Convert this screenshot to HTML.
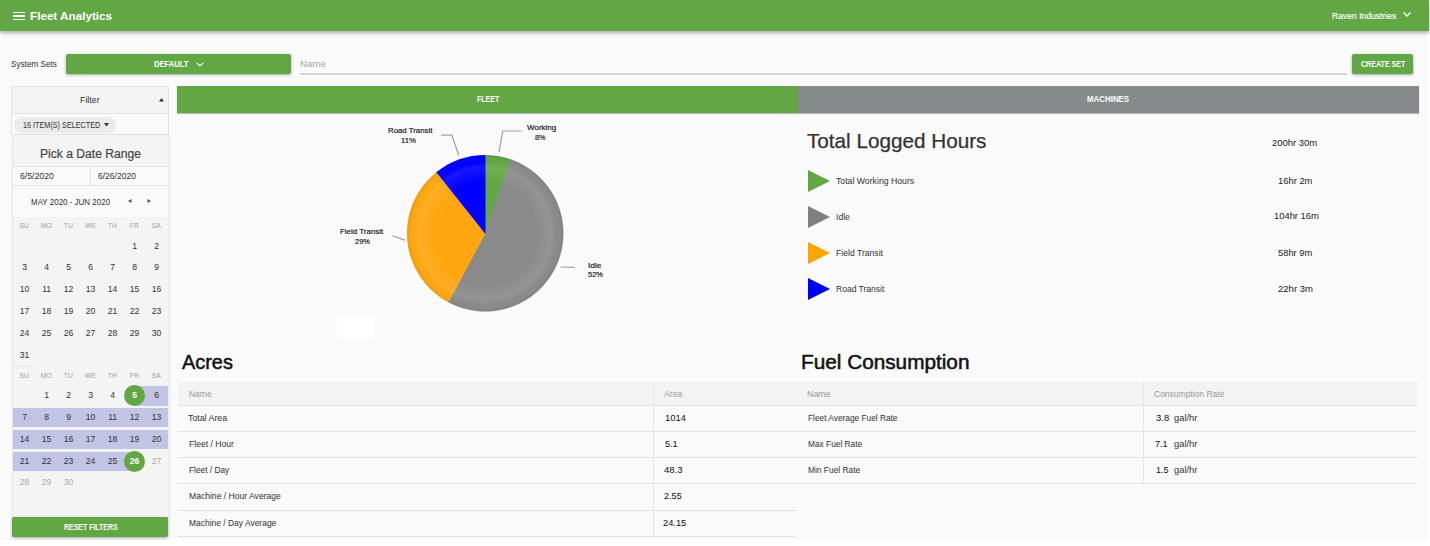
<!DOCTYPE html>
<html><head><meta charset="utf-8">
<style>
*{box-sizing:border-box;margin:0;padding:0}
html,body{width:1430px;height:546px;overflow:hidden;background:#fff;font-family:"Liberation Sans",sans-serif;color:#333}
.a{position:absolute}
.t{position:absolute;white-space:nowrap;line-height:1}
</style></head>
<body>

<div class="a" style="left:0px;top:0px;width:1428px;height:540px;background:#fafafa"></div>
<div class="a" style="left:0px;top:0px;width:1429px;height:31px;background:#62a744;box-shadow:0 2px 4px rgba(0,0,0,.32)"></div>
<div class="a" style="left:13.2px;top:12.2px;width:11.5px;height:1.25px;background:#fff"></div>
<div class="a" style="left:13.2px;top:15.4px;width:11.5px;height:1.25px;background:#fff"></div>
<div class="a" style="left:13.2px;top:18.6px;width:11.5px;height:1.25px;background:#fff"></div>
<div class="t" style="left:30.49px;top:10.57px;font-size:11.5px;color:#fff;font-weight:700;transform:scaleX(1.0157);transform-origin:0 0;">Fleet Analytics</div>
<div class="t" style="left:1331.90px;top:11.92px;font-size:8.6px;color:#fff;font-weight:400;transform:scaleX(0.9969);transform-origin:0 0;-webkit-text-stroke:0.15px #fff">Raven Industries</div>
<svg class="a" style="left:1402px;top:11px" width="10" height="7" viewBox="0 0 10 7"><path d="M1.5 1.5 L5 5 L8.5 1.5" stroke="#fff" stroke-width="1.3" fill="none"/></svg>
<div class="t" style="left:11.01px;top:60.48px;font-size:9px;color:#333;font-weight:400;transform:scaleX(0.9081);transform-origin:0 0;">System Sets</div>
<div class="a" style="left:66px;top:54px;width:225px;height:20px;background:#62a744;box-shadow:0 1px 3px rgba(0,0,0,.35);border-radius:2px"></div>
<div class="t" style="left:153.64px;top:60.27px;font-size:8.3px;color:#fff;font-weight:700;transform:scaleX(0.9120);transform-origin:0 0;">DEFAULT</div>
<svg class="a" style="left:194.5px;top:60.5px" width="10" height="7" viewBox="0 0 10 7"><path d="M1.6 1.8 L5 5 L8.4 1.8" stroke="#fff" stroke-width="1.15" fill="none"/></svg>
<div class="t" style="left:300.46px;top:60.28px;font-size:9px;color:#a9a9a9;font-weight:400;transform:scaleX(1.0733);transform-origin:0 0;">Name</div>
<div class="a" style="left:300px;top:73px;width:1047px;height:1.7px;background:#d4d4d4"></div>
<div class="a" style="left:1352px;top:54px;width:61px;height:20px;background:#62a744;box-shadow:0 1px 3px rgba(0,0,0,.35);border-radius:2px"></div>
<div class="t" style="left:1360.55px;top:60.27px;font-size:8.3px;color:#fff;font-weight:700;transform:scaleX(0.8548);transform-origin:0 0;">CREATE SET</div>
<div class="a" style="left:11px;top:86px;width:158px;height:49px;background:#fafafa;border:1px solid #e3e3e3"></div>
<div class="a" style="left:12px;top:87px;width:156px;height:27px;background:#f4f4f4;border-bottom:1px solid #e3e3e3"></div>
<div class="t" style="left:80.39px;top:95.88px;font-size:9px;color:#333;font-weight:400;transform:scaleX(0.9809);transform-origin:0 0;">Filter</div>
<svg class="a" style="left:159px;top:98px" width="5" height="4" viewBox="0 0 5 4"><path d="M0 3.5 L2.5 0 L5 3.5Z" fill="#333"/></svg>
<div class="a" style="left:14px;top:117px;width:102px;height:16px;border-radius:8px;background:#ebebeb"></div>
<div class="t" style="left:22.65px;top:121.09px;font-size:8.4px;color:#333;font-weight:400;transform:scaleX(0.8651);transform-origin:0 0;">16 ITEM(S) SELECTED</div>
<svg class="a" style="left:104px;top:123px" width="5" height="4" viewBox="0 0 5 4"><path d="M0 0 L5 0 L2.5 3.5Z" fill="#333"/></svg>
<div class="a" style="left:13px;top:135px;width:156px;height:382px;background:#f4f4f4;box-shadow:0 1px 2px rgba(0,0,0,.25)"></div>
<div class="t" style="left:40.18px;top:148.12px;font-size:12.5px;color:#444;font-weight:400;transform:scaleX(0.9694);transform-origin:0 0;-webkit-text-stroke:0.2px #444">Pick a Date Range</div>
<div class="a" style="left:13px;top:166px;width:155px;height:20px;background:#fafafa;border-top:1px solid #e4e4e4;border-bottom:1px solid #e4e4e4"></div>
<div class="a" style="left:90px;top:166px;width:1px;height:20px;background:#e4e4e4"></div>
<div class="t" style="left:19.50px;top:171.65px;font-size:8.8px;color:#333;font-weight:400;transform:scaleX(0.9901);transform-origin:0 0;">6/5/2020</div>
<div class="t" style="left:97.70px;top:171.65px;font-size:8.8px;color:#333;font-weight:400;transform:scaleX(0.9708);transform-origin:0 0;">6/26/2020</div>
<div class="a" style="left:13px;top:186px;width:155px;height:31px;background:#fafafa"></div>
<div class="t" style="left:31.02px;top:198.02px;font-size:8.6px;color:#333;font-weight:400;transform:scaleX(0.9281);transform-origin:0 0;">MAY 2020 - JUN 2020</div>
<svg class="a" style="left:127.5px;top:199.4px" width="4" height="4" viewBox="0 0 4 4"><path d="M3.5 0 L0 2 L3.5 4Z" fill="#555"/></svg>
<svg class="a" style="left:147.2px;top:199.4px" width="4" height="4" viewBox="0 0 4 4"><path d="M0.5 0 L4 2 L0.5 4Z" fill="#555"/></svg>
<div class="t" style="left:-175.70px;width:400px;text-align:center;top:223.34px;font-size:6.8px;color:#9e9e9e;font-weight:400;">SU</div>
<div class="t" style="left:-153.70px;width:400px;text-align:center;top:223.34px;font-size:6.8px;color:#9e9e9e;font-weight:400;">MO</div>
<div class="t" style="left:-131.70px;width:400px;text-align:center;top:223.34px;font-size:6.8px;color:#9e9e9e;font-weight:400;">TU</div>
<div class="t" style="left:-109.70px;width:400px;text-align:center;top:223.34px;font-size:6.8px;color:#9e9e9e;font-weight:400;">WE</div>
<div class="t" style="left:-87.70px;width:400px;text-align:center;top:223.34px;font-size:6.8px;color:#9e9e9e;font-weight:400;">TH</div>
<div class="t" style="left:-65.70px;width:400px;text-align:center;top:223.34px;font-size:6.8px;color:#9e9e9e;font-weight:400;">FR</div>
<div class="t" style="left:-43.70px;width:400px;text-align:center;top:223.34px;font-size:6.8px;color:#9e9e9e;font-weight:400;">SA</div>
<div class="t" style="left:-65.40px;width:400px;text-align:center;top:241.52px;font-size:8.6px;color:#333;font-weight:400;">1</div>
<div class="t" style="left:-43.40px;width:400px;text-align:center;top:241.52px;font-size:8.6px;color:#333;font-weight:400;">2</div>
<div class="t" style="left:-175.40px;width:400px;text-align:center;top:263.42px;font-size:8.6px;color:#333;font-weight:400;">3</div>
<div class="t" style="left:-153.40px;width:400px;text-align:center;top:263.42px;font-size:8.6px;color:#333;font-weight:400;">4</div>
<div class="t" style="left:-131.40px;width:400px;text-align:center;top:263.42px;font-size:8.6px;color:#333;font-weight:400;">5</div>
<div class="t" style="left:-109.40px;width:400px;text-align:center;top:263.42px;font-size:8.6px;color:#333;font-weight:400;">6</div>
<div class="t" style="left:-87.40px;width:400px;text-align:center;top:263.42px;font-size:8.6px;color:#333;font-weight:400;">7</div>
<div class="t" style="left:-65.40px;width:400px;text-align:center;top:263.42px;font-size:8.6px;color:#333;font-weight:400;">8</div>
<div class="t" style="left:-43.40px;width:400px;text-align:center;top:263.42px;font-size:8.6px;color:#333;font-weight:400;">9</div>
<div class="t" style="left:-175.40px;width:400px;text-align:center;top:285.32px;font-size:8.6px;color:#333;font-weight:400;">10</div>
<div class="t" style="left:-153.40px;width:400px;text-align:center;top:285.32px;font-size:8.6px;color:#333;font-weight:400;">11</div>
<div class="t" style="left:-131.40px;width:400px;text-align:center;top:285.32px;font-size:8.6px;color:#333;font-weight:400;">12</div>
<div class="t" style="left:-109.40px;width:400px;text-align:center;top:285.32px;font-size:8.6px;color:#333;font-weight:400;">13</div>
<div class="t" style="left:-87.40px;width:400px;text-align:center;top:285.32px;font-size:8.6px;color:#333;font-weight:400;">14</div>
<div class="t" style="left:-65.40px;width:400px;text-align:center;top:285.32px;font-size:8.6px;color:#333;font-weight:400;">15</div>
<div class="t" style="left:-43.40px;width:400px;text-align:center;top:285.32px;font-size:8.6px;color:#333;font-weight:400;">16</div>
<div class="t" style="left:-175.40px;width:400px;text-align:center;top:307.22px;font-size:8.6px;color:#333;font-weight:400;">17</div>
<div class="t" style="left:-153.40px;width:400px;text-align:center;top:307.22px;font-size:8.6px;color:#333;font-weight:400;">18</div>
<div class="t" style="left:-131.40px;width:400px;text-align:center;top:307.22px;font-size:8.6px;color:#333;font-weight:400;">19</div>
<div class="t" style="left:-109.40px;width:400px;text-align:center;top:307.22px;font-size:8.6px;color:#333;font-weight:400;">20</div>
<div class="t" style="left:-87.40px;width:400px;text-align:center;top:307.22px;font-size:8.6px;color:#333;font-weight:400;">21</div>
<div class="t" style="left:-65.40px;width:400px;text-align:center;top:307.22px;font-size:8.6px;color:#333;font-weight:400;">22</div>
<div class="t" style="left:-43.40px;width:400px;text-align:center;top:307.22px;font-size:8.6px;color:#333;font-weight:400;">23</div>
<div class="t" style="left:-175.40px;width:400px;text-align:center;top:329.22px;font-size:8.6px;color:#333;font-weight:400;">24</div>
<div class="t" style="left:-153.40px;width:400px;text-align:center;top:329.22px;font-size:8.6px;color:#333;font-weight:400;">25</div>
<div class="t" style="left:-131.40px;width:400px;text-align:center;top:329.22px;font-size:8.6px;color:#333;font-weight:400;">26</div>
<div class="t" style="left:-109.40px;width:400px;text-align:center;top:329.22px;font-size:8.6px;color:#333;font-weight:400;">27</div>
<div class="t" style="left:-87.40px;width:400px;text-align:center;top:329.22px;font-size:8.6px;color:#333;font-weight:400;">28</div>
<div class="t" style="left:-65.40px;width:400px;text-align:center;top:329.22px;font-size:8.6px;color:#333;font-weight:400;">29</div>
<div class="t" style="left:-43.40px;width:400px;text-align:center;top:329.22px;font-size:8.6px;color:#333;font-weight:400;">30</div>
<div class="t" style="left:-175.40px;width:400px;text-align:center;top:350.72px;font-size:8.6px;color:#333;font-weight:400;">31</div>
<div class="a" style="left:13px;top:366px;width:22px;height:1px;background:#e6e6e6"></div>
<div class="t" style="left:-175.70px;width:400px;text-align:center;top:372.84px;font-size:6.8px;color:#9e9e9e;font-weight:400;">SU</div>
<div class="t" style="left:-153.70px;width:400px;text-align:center;top:372.84px;font-size:6.8px;color:#9e9e9e;font-weight:400;">MO</div>
<div class="t" style="left:-131.70px;width:400px;text-align:center;top:372.84px;font-size:6.8px;color:#9e9e9e;font-weight:400;">TU</div>
<div class="t" style="left:-109.70px;width:400px;text-align:center;top:372.84px;font-size:6.8px;color:#9e9e9e;font-weight:400;">WE</div>
<div class="t" style="left:-87.70px;width:400px;text-align:center;top:372.84px;font-size:6.8px;color:#9e9e9e;font-weight:400;">TH</div>
<div class="t" style="left:-65.70px;width:400px;text-align:center;top:372.84px;font-size:6.8px;color:#9e9e9e;font-weight:400;">FR</div>
<div class="t" style="left:-43.70px;width:400px;text-align:center;top:372.84px;font-size:6.8px;color:#9e9e9e;font-weight:400;">SA</div>
<div class="a" style="left:134px;top:386px;width:34px;height:19.6px;background:#c1c4e4"></div>
<div class="a" style="left:13px;top:407.9px;width:155px;height:19.6px;background:#c1c4e4"></div>
<div class="a" style="left:13px;top:429.7px;width:155px;height:19.6px;background:#c1c4e4"></div>
<div class="a" style="left:13px;top:451.5px;width:121px;height:19.6px;background:#c1c4e4"></div>
<div class="a" style="left:124px;top:385px;width:21px;height:21px;background:#62a744;border-radius:50%"></div>
<div class="a" style="left:124px;top:450.5px;width:21px;height:21px;background:#62a744;border-radius:50%"></div>
<div class="t" style="left:-153.40px;width:400px;text-align:center;top:391.42px;font-size:8.6px;color:#333;font-weight:400;">1</div>
<div class="t" style="left:-131.40px;width:400px;text-align:center;top:391.42px;font-size:8.6px;color:#333;font-weight:400;">2</div>
<div class="t" style="left:-109.40px;width:400px;text-align:center;top:391.42px;font-size:8.6px;color:#333;font-weight:400;">3</div>
<div class="t" style="left:-87.40px;width:400px;text-align:center;top:391.42px;font-size:8.6px;color:#333;font-weight:400;">4</div>
<div class="t" style="left:-65.40px;width:400px;text-align:center;top:391.42px;font-size:8.6px;color:#fff;font-weight:700;">5</div>
<div class="t" style="left:-43.40px;width:400px;text-align:center;top:391.42px;font-size:8.6px;color:#333;font-weight:400;">6</div>
<div class="t" style="left:-175.40px;width:400px;text-align:center;top:413.22px;font-size:8.6px;color:#333;font-weight:400;">7</div>
<div class="t" style="left:-153.40px;width:400px;text-align:center;top:413.22px;font-size:8.6px;color:#333;font-weight:400;">8</div>
<div class="t" style="left:-131.40px;width:400px;text-align:center;top:413.22px;font-size:8.6px;color:#333;font-weight:400;">9</div>
<div class="t" style="left:-109.40px;width:400px;text-align:center;top:413.22px;font-size:8.6px;color:#333;font-weight:400;">10</div>
<div class="t" style="left:-87.40px;width:400px;text-align:center;top:413.22px;font-size:8.6px;color:#333;font-weight:400;">11</div>
<div class="t" style="left:-65.40px;width:400px;text-align:center;top:413.22px;font-size:8.6px;color:#333;font-weight:400;">12</div>
<div class="t" style="left:-43.40px;width:400px;text-align:center;top:413.22px;font-size:8.6px;color:#333;font-weight:400;">13</div>
<div class="t" style="left:-175.40px;width:400px;text-align:center;top:435.02px;font-size:8.6px;color:#333;font-weight:400;">14</div>
<div class="t" style="left:-153.40px;width:400px;text-align:center;top:435.02px;font-size:8.6px;color:#333;font-weight:400;">15</div>
<div class="t" style="left:-131.40px;width:400px;text-align:center;top:435.02px;font-size:8.6px;color:#333;font-weight:400;">16</div>
<div class="t" style="left:-109.40px;width:400px;text-align:center;top:435.02px;font-size:8.6px;color:#333;font-weight:400;">17</div>
<div class="t" style="left:-87.40px;width:400px;text-align:center;top:435.02px;font-size:8.6px;color:#333;font-weight:400;">18</div>
<div class="t" style="left:-65.40px;width:400px;text-align:center;top:435.02px;font-size:8.6px;color:#333;font-weight:400;">19</div>
<div class="t" style="left:-43.40px;width:400px;text-align:center;top:435.02px;font-size:8.6px;color:#333;font-weight:400;">20</div>
<div class="t" style="left:-175.40px;width:400px;text-align:center;top:456.82px;font-size:8.6px;color:#333;font-weight:400;">21</div>
<div class="t" style="left:-153.40px;width:400px;text-align:center;top:456.82px;font-size:8.6px;color:#333;font-weight:400;">22</div>
<div class="t" style="left:-131.40px;width:400px;text-align:center;top:456.82px;font-size:8.6px;color:#333;font-weight:400;">23</div>
<div class="t" style="left:-109.40px;width:400px;text-align:center;top:456.82px;font-size:8.6px;color:#333;font-weight:400;">24</div>
<div class="t" style="left:-87.40px;width:400px;text-align:center;top:456.82px;font-size:8.6px;color:#333;font-weight:400;">25</div>
<div class="t" style="left:-65.40px;width:400px;text-align:center;top:456.82px;font-size:8.6px;color:#fff;font-weight:700;">26</div>
<div class="t" style="left:-43.40px;width:400px;text-align:center;top:456.82px;font-size:8.6px;color:#a9a9a9;font-weight:400;">27</div>
<div class="t" style="left:-175.40px;width:400px;text-align:center;top:478.22px;font-size:8.6px;color:#a9a9a9;font-weight:400;">28</div>
<div class="t" style="left:-153.40px;width:400px;text-align:center;top:478.22px;font-size:8.6px;color:#a9a9a9;font-weight:400;">29</div>
<div class="t" style="left:-131.40px;width:400px;text-align:center;top:478.22px;font-size:8.6px;color:#a9a9a9;font-weight:400;">30</div>
<div class="a" style="left:12px;top:517px;width:156px;height:20px;background:#62a744;box-shadow:0 1px 3px rgba(0,0,0,.35);border-radius:2px"></div>
<div class="t" style="left:63.56px;top:523.47px;font-size:8.3px;color:#fff;font-weight:700;transform:scaleX(0.8399);transform-origin:0 0;">RESET FILTERS</div>
<div class="a" style="left:177px;top:86px;width:621px;height:27px;background:#62a744;box-shadow:0 1px 1px rgba(0,0,0,.25)"></div>
<div class="a" style="left:798px;top:86px;width:621px;height:27px;background:#878a8a;box-shadow:0 1px 1px rgba(0,0,0,.25)"></div>
<div class="t" style="left:476.95px;top:95.07px;font-size:8.3px;color:#fff;font-weight:700;transform:scaleX(0.8482);transform-origin:0 0;">FLEET</div>
<div class="t" style="left:1087.12px;top:95.07px;font-size:8.3px;color:#fff;font-weight:700;transform:scaleX(0.9523);transform-origin:0 0;">MACHINES</div>
<svg class="a" style="left:0;top:0" width="1430" height="546" viewBox="0 0 1430 546"><defs><radialGradient id="bev" cx="485.2" cy="233.3" r="78.0" gradientUnits="userSpaceOnUse"><stop offset="0" stop-color="#fff" stop-opacity="0"/><stop offset="0.66" stop-color="#fff" stop-opacity="0"/><stop offset="0.85" stop-color="#fff" stop-opacity="0.09"/><stop offset="0.92" stop-color="#fff" stop-opacity="0.0"/><stop offset="1" stop-color="#000" stop-opacity="0.09"/></radialGradient></defs><path d="M485.2 233.3 L485.20 155.30 A78 78 0 0 1 510.72 159.59 Z" fill="#62a744" stroke="#62a744" stroke-width="0.6" stroke-linejoin="round"/><path d="M485.2 233.3 L510.72 159.59 A78 78 0 1 1 448.28 302.01 Z" fill="#8a8a8a" stroke="#8a8a8a" stroke-width="0.6" stroke-linejoin="round"/><path d="M485.2 233.3 L448.28 302.01 A78 78 0 0 1 436.64 172.26 Z" fill="#ffa611" stroke="#ffa611" stroke-width="0.6" stroke-linejoin="round"/><path d="M485.2 233.3 L436.64 172.26 A78 78 0 0 1 485.20 155.30 Z" fill="#0000ff" stroke="#0000ff" stroke-width="0.6" stroke-linejoin="round"/><circle cx="485.2" cy="233.3" r="78" fill="url(#bev)"/><path d="M499 152.1 L502.7 131 L521.6 131" stroke="#a0a0a0" stroke-width="1.2" fill="none"/><path d="M458.7 155.3 L451.8 135.1 L441 135.1" stroke="#a0a0a0" stroke-width="1.2" fill="none"/><path d="M404.9 240.1 L392.3 235.7" stroke="#a0a0a0" stroke-width="1.2" fill="none"/><path d="M560.7 267 L574.5 267.3" stroke="#a0a0a0" stroke-width="1.2" fill="none"/></svg>
<div class="t" style="left:527.22px;top:124.27px;font-size:7.6px;color:#111;font-weight:400;transform:scaleX(1.0557);transform-origin:0 0;-webkit-text-stroke:0.15px #111">Working</div>
<div class="t" style="left:534.54px;top:133.97px;font-size:7.6px;color:#111;font-weight:400;transform:scaleX(0.9663);transform-origin:0 0;-webkit-text-stroke:0.15px #111">8%</div>
<div class="t" style="left:387.53px;top:127.17px;font-size:7.6px;color:#111;font-weight:400;transform:scaleX(1.0298);transform-origin:0 0;-webkit-text-stroke:0.15px #111">Road Transit</div>
<div class="t" style="left:401.13px;top:136.77px;font-size:7.6px;color:#111;font-weight:400;transform:scaleX(1.0277);transform-origin:0 0;-webkit-text-stroke:0.15px #111">11%</div>
<div class="t" style="left:339.52px;top:228.37px;font-size:7.6px;color:#111;font-weight:400;transform:scaleX(1.0459);transform-origin:0 0;-webkit-text-stroke:0.15px #111">Field Transit</div>
<div class="t" style="left:354.64px;top:237.97px;font-size:7.6px;color:#111;font-weight:400;transform:scaleX(0.9815);transform-origin:0 0;-webkit-text-stroke:0.15px #111">29%</div>
<div class="t" style="left:587.51px;top:261.67px;font-size:7.6px;color:#111;font-weight:400;transform:scaleX(1.1009);transform-origin:0 0;-webkit-text-stroke:0.15px #111">Idle</div>
<div class="t" style="left:587.54px;top:270.77px;font-size:7.6px;color:#111;font-weight:400;transform:scaleX(0.9815);transform-origin:0 0;-webkit-text-stroke:0.15px #111">52%</div>
<div class="a" style="left:337px;top:317px;width:37px;height:21px;background:#fff"></div>
<div class="t" style="left:807.28px;top:130.82px;font-size:20.3px;color:#333;font-weight:400;transform:scaleX(1.0202);transform-origin:0 0;-webkit-text-stroke:0.25px #333">Total Logged Hours</div>
<div class="t" style="left:1272.27px;top:138.68px;font-size:9px;color:#222;font-weight:400;transform:scaleX(1.0495);transform-origin:0 0;">200hr 30m</div>
<svg class="a" style="left:808px;top:170px" width="22" height="22" viewBox="0 0 22 22"><path d="M0 0 L22 11 L0 22Z" fill="#62a744"/></svg>
<div class="t" style="left:836.00px;top:176.95px;font-size:8.8px;color:#333;font-weight:400;transform:scaleX(0.9894);transform-origin:0 0;">Total Working Hours</div>
<div class="t" style="left:1278.37px;top:177.15px;font-size:8.8px;color:#222;font-weight:400;transform:scaleX(1.0674);transform-origin:0 0;">16hr 2m</div>
<svg class="a" style="left:808px;top:206px" width="22" height="22" viewBox="0 0 22 22"><path d="M0 0 L22 11 L0 22Z" fill="#808080"/></svg>
<div class="t" style="left:836.00px;top:212.95px;font-size:8.8px;color:#333;font-weight:400;transform:scaleX(0.9726);transform-origin:0 0;">Idle</div>
<div class="t" style="left:1273.97px;top:212.45px;font-size:8.8px;color:#222;font-weight:400;transform:scaleX(1.0664);transform-origin:0 0;">104hr 16m</div>
<svg class="a" style="left:808px;top:242px" width="22" height="22" viewBox="0 0 22 22"><path d="M0 0 L22 11 L0 22Z" fill="#ffa500"/></svg>
<div class="t" style="left:836.00px;top:248.95px;font-size:8.8px;color:#333;font-weight:400;transform:scaleX(0.9809);transform-origin:0 0;">Field Transit</div>
<div class="t" style="left:1278.37px;top:248.75px;font-size:8.8px;color:#222;font-weight:400;transform:scaleX(1.0611);transform-origin:0 0;">58hr 9m</div>
<svg class="a" style="left:808px;top:278px" width="22" height="22" viewBox="0 0 22 22"><path d="M0 0 L22 11 L0 22Z" fill="#0000ff"/></svg>
<div class="t" style="left:836.00px;top:284.95px;font-size:8.8px;color:#333;font-weight:400;transform:scaleX(0.9684);transform-origin:0 0;">Road Transit</div>
<div class="t" style="left:1277.67px;top:284.95px;font-size:8.8px;color:#222;font-weight:400;transform:scaleX(1.0832);transform-origin:0 0;">22hr 3m</div>
<div class="t" style="left:182.10px;top:352.84px;font-size:19.8px;color:#111;font-weight:400;transform:scaleX(1.0063);transform-origin:0 0;-webkit-text-stroke:0.5px #111">Acres</div>
<div class="t" style="left:801.27px;top:352.84px;font-size:19.8px;color:#111;font-weight:400;transform:scaleX(1.0494);transform-origin:0 0;-webkit-text-stroke:0.5px #111">Fuel Consumption</div>
<div class="a" style="left:178px;top:382px;width:619px;height:23.5px;background:#f3f3f3"></div>
<div class="a" style="left:178px;top:405px;width:619px;height:1.2px;background:#e3e3e3"></div>
<div class="a" style="left:178px;top:431px;width:619px;height:1.2px;background:#e3e3e3"></div>
<div class="a" style="left:178px;top:457px;width:619px;height:1.2px;background:#e3e3e3"></div>
<div class="a" style="left:178px;top:483px;width:619px;height:1.2px;background:#e3e3e3"></div>
<div class="a" style="left:178px;top:510px;width:619px;height:1.2px;background:#e3e3e3"></div>
<div class="a" style="left:178px;top:536px;width:619px;height:1.2px;background:#e3e3e3"></div>
<div class="a" style="left:653px;top:382px;width:1px;height:154px;background:#e6e6e6"></div>
<div class="t" style="left:188.50px;top:389.58px;font-size:9px;color:#9a9a9a;font-weight:400;transform:scaleX(0.9407);transform-origin:0 0;">Name</div>
<div class="t" style="left:664.10px;top:389.58px;font-size:9px;color:#9a9a9a;font-weight:400;transform:scaleX(0.9627);transform-origin:0 0;">Area</div>
<div class="t" style="left:188.49px;top:413.98px;font-size:9px;color:#333;font-weight:400;transform:scaleX(0.9771);transform-origin:0 0;">Total Area</div>
<div class="t" style="left:664.97px;top:414.28px;font-size:9px;color:#111;font-weight:400;transform:scaleX(1.0412);transform-origin:0 0;">1014</div>
<div class="t" style="left:188.50px;top:439.98px;font-size:9px;color:#333;font-weight:400;transform:scaleX(0.9547);transform-origin:0 0;">Fleet / Hour</div>
<div class="t" style="left:665.38px;top:440.28px;font-size:9px;color:#111;font-weight:400;transform:scaleX(1.0096);transform-origin:0 0;">5.1</div>
<div class="t" style="left:188.51px;top:465.98px;font-size:9px;color:#333;font-weight:400;transform:scaleX(0.9257);transform-origin:0 0;">Fleet / Day</div>
<div class="t" style="left:663.57px;top:466.28px;font-size:9px;color:#111;font-weight:400;transform:scaleX(1.0591);transform-origin:0 0;">48.3</div>
<div class="t" style="left:188.50px;top:491.98px;font-size:9px;color:#333;font-weight:400;transform:scaleX(0.9524);transform-origin:0 0;">Machine / Hour Average</div>
<div class="t" style="left:663.98px;top:492.28px;font-size:9px;color:#111;font-weight:400;transform:scaleX(1.0118);transform-origin:0 0;">2.55</div>
<div class="t" style="left:188.50px;top:518.98px;font-size:9px;color:#333;font-weight:400;transform:scaleX(0.9397);transform-origin:0 0;">Machine / Day Average</div>
<div class="t" style="left:663.37px;top:519.28px;font-size:9px;color:#111;font-weight:400;transform:scaleX(1.0319);transform-origin:0 0;">24.15</div>
<div class="a" style="left:797px;top:382px;width:620px;height:23.5px;background:#f3f3f3"></div>
<div class="a" style="left:797px;top:405px;width:620px;height:1.2px;background:#e3e3e3"></div>
<div class="a" style="left:797px;top:431px;width:620px;height:1.2px;background:#e3e3e3"></div>
<div class="a" style="left:797px;top:457px;width:620px;height:1.2px;background:#e3e3e3"></div>
<div class="a" style="left:797px;top:483px;width:620px;height:1.2px;background:#e3e3e3"></div>
<div class="a" style="left:1143px;top:382px;width:1px;height:101px;background:#e6e6e6"></div>
<div class="t" style="left:807.49px;top:389.58px;font-size:9px;color:#9a9a9a;font-weight:400;transform:scaleX(0.9835);transform-origin:0 0;">Name</div>
<div class="t" style="left:1154.10px;top:389.58px;font-size:9px;color:#9a9a9a;font-weight:400;transform:scaleX(0.9443);transform-origin:0 0;">Consumption Rate</div>
<div class="t" style="left:807.51px;top:413.98px;font-size:9px;color:#333;font-weight:400;transform:scaleX(0.9235);transform-origin:0 0;">Fleet Average Fuel Rate</div>
<div class="t" style="left:1155.67px;top:414.28px;font-size:9px;color:#111;font-weight:400;transform:scaleX(1.0517);transform-origin:0 0;">3.8</div>
<div class="t" style="left:1173.67px;top:414.28px;font-size:9px;color:#333;font-weight:400;transform:scaleX(1.0372);transform-origin:0 0;">gal/hr</div>
<div class="t" style="left:807.51px;top:439.98px;font-size:9px;color:#333;font-weight:400;transform:scaleX(0.9257);transform-origin:0 0;">Max Fuel Rate</div>
<div class="t" style="left:1155.08px;top:440.28px;font-size:9px;color:#111;font-weight:400;transform:scaleX(1.0096);transform-origin:0 0;">7.1</div>
<div class="t" style="left:1173.67px;top:440.28px;font-size:9px;color:#333;font-weight:400;transform:scaleX(1.0372);transform-origin:0 0;">gal/hr</div>
<div class="t" style="left:807.51px;top:465.98px;font-size:9px;color:#333;font-weight:400;transform:scaleX(0.9332);transform-origin:0 0;">Min Fuel Rate</div>
<div class="t" style="left:1156.08px;top:466.28px;font-size:9px;color:#111;font-weight:400;transform:scaleX(1.0012);transform-origin:0 0;">1.5</div>
<div class="t" style="left:1173.67px;top:466.28px;font-size:9px;color:#333;font-weight:400;transform:scaleX(1.0372);transform-origin:0 0;">gal/hr</div>
</body></html>
